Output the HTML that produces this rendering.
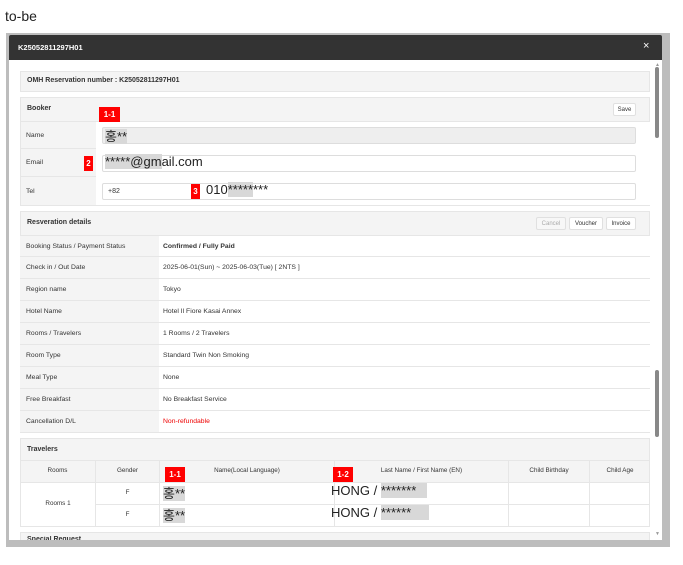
<!DOCTYPE html>
<html><head><meta charset="utf-8"><style>
*{box-sizing:border-box;margin:0;padding:0}
body{width:683px;height:565px;background:#fff;position:relative;overflow:hidden;font-family:"Liberation Sans","Noto Sans CJK KR",sans-serif;color:#222}
.a{position:absolute}
.s{font-size:7px;color:#333}
.tag{position:absolute;background:#f00;color:#fff;font-size:8px;font-weight:bold;text-align:center;line-height:15px}
.box{position:absolute;border:1px solid #e6e6e6;background:#f4f4f4}
.row{position:absolute;left:20px;width:630px;border-bottom:1px solid #e6e6e6;background:#fff}
.lbl{position:absolute;left:0;top:0;bottom:0;background:#f4f4f4;font-size:6.8px;color:#333;padding-left:6px;display:flex;align-items:center}
.val{position:absolute;top:0;bottom:0;font-size:6.8px;color:#333;display:flex;align-items:center}
.btn{position:absolute;background:#fff;border:1px solid #e0e0e0;border-radius:2px;font-size:6px;color:#333;text-align:center;line-height:12px}
.inp{position:absolute;left:102px;width:534px;height:17px;border:1px solid #ddd;border-radius:2px;background:#fff}
.hl{background:#d8d8d8}
.th{position:absolute;font-size:6.3px;color:#333;text-align:center;border-right:1px solid #e6e6e6}
</style></head><body>
<div class="a" style="left:5px;top:8px;font-size:14px;color:#222">to-be</div>
<div class="a" style="left:6px;top:33px;width:664px;height:514px;background:#bdbdbd"></div>
<div class="a" style="left:9px;top:35px;width:653px;height:25px;background:#333;border-radius:2px 2px 0 0"></div>
<div class="a" style="left:18px;top:43px;color:#fff;font-size:7.5px;font-weight:bold">K25052811297H01</div>
<div class="a" style="left:643px;top:40px;color:#fff;font-size:11px">×</div>
<div class="a" style="left:9px;top:60px;width:653px;height:480px;background:#fff"></div>
<div class="a" style="left:655px;top:67px;width:4px;height:71px;background:#888;border-radius:2px"></div>
<div class="a" style="left:655px;top:370px;width:4px;height:67px;background:#888;border-radius:2px"></div>
<div class="a" style="left:655px;top:62px;font-size:5px;color:#999">▲</div>
<div class="a" style="left:655px;top:531px;font-size:5px;color:#999">▼</div>

<div class="box" style="left:20px;top:71px;width:630px;height:21px"></div>
<div class="a s" style="left:27px;top:77px;font-weight:bold">OMH Reservation number : K25052811297H01</div>

<div class="box" style="left:20px;top:97px;width:630px;height:109px"></div>
<div class="a s" style="left:27px;top:105px;font-weight:bold">Booker</div>
<div class="btn" style="left:613px;top:103px;width:23px;height:13px">Save</div>
<div class="row" style="top:121px;height:28px;background:transparent;border-top:1px solid #e6e6e6"><div class="lbl" style="width:76px;background:transparent">Name</div></div>
<div class="row" style="top:149px;height:28px;background:transparent"><div class="lbl" style="width:76px;background:transparent">Email</div></div>
<div class="row" style="top:177px;height:28px;background:transparent;border:none"><div class="lbl" style="width:76px;background:transparent">Tel</div></div>
<div class="a" style="left:96px;top:122px;width:554px;height:83px;background:#fff"></div>
<div class="inp" style="top:127px;background:#eee"></div>
<div class="inp" style="top:155px"></div>
<div class="inp" style="top:183px"></div>
<div class="a" style="left:105px;top:126px;font-size:13px"><span class="hl">홍**</span></div>
<div class="a" style="left:105px;top:154px;font-size:13px"><span class="hl">*****@gm</span>ail.com</div>
<div class="a s" style="left:108px;top:188px">+82</div>
<div class="a" style="left:206px;top:182px;font-size:13px">010<span class="hl">*****</span>***</div>
<div class="tag" style="left:99px;top:107px;width:21px">1-1</div>
<div class="tag" style="left:84px;top:156px;width:9px">2</div>
<div class="tag" style="left:191px;top:184px;width:9px">3</div>

<div class="box" style="left:20px;top:211px;width:630px;height:222px"></div>
<div class="a s" style="left:27px;top:219px;font-weight:bold">Resveration details</div>
<div class="btn" style="left:536px;top:217px;width:30px;height:13px;color:#aaa;background:#f7f7f7">Cancel</div>
<div class="btn" style="left:569px;top:217px;width:34px;height:13px">Voucher</div>
<div class="btn" style="left:606px;top:217px;width:30px;height:13px">Invoice</div>

<div class="row" style="top:235px;height:22px;border-top:1px solid #e6e6e6"><div class="lbl" style="width:139px">Booking Status / Payment Status</div><div class="val" style="left:143px;font-weight:bold">Confirmed / Fully Paid</div></div>
<div class="row" style="top:257px;height:22px"><div class="lbl" style="width:139px">Check in / Out Date</div><div class="val" style="left:143px">2025-06-01(Sun) ~ 2025-06-03(Tue) [ 2NTS ]</div></div>
<div class="row" style="top:279px;height:22px"><div class="lbl" style="width:139px">Region name</div><div class="val" style="left:143px">Tokyo</div></div>
<div class="row" style="top:301px;height:22px"><div class="lbl" style="width:139px">Hotel Name</div><div class="val" style="left:143px">Hotel Il Fiore Kasai Annex</div></div>
<div class="row" style="top:323px;height:22px"><div class="lbl" style="width:139px">Rooms / Travelers</div><div class="val" style="left:143px">1 Rooms / 2 Travelers</div></div>
<div class="row" style="top:345px;height:22px"><div class="lbl" style="width:139px">Room Type</div><div class="val" style="left:143px">Standard Twin Non Smoking</div></div>
<div class="row" style="top:367px;height:22px"><div class="lbl" style="width:139px">Meal Type</div><div class="val" style="left:143px">None</div></div>
<div class="row" style="top:389px;height:22px"><div class="lbl" style="width:139px">Free Breakfast</div><div class="val" style="left:143px">No Breakfast Service</div></div>
<div class="row" style="top:411px;height:22px"><div class="lbl" style="width:139px">Cancellation D/L</div><div class="val" style="left:143px;color:#e00">Non-refundable</div></div>

<div class="box" style="left:20px;top:438px;width:630px;height:89px"></div>
<div class="a s" style="left:27px;top:446px;font-weight:bold">Travelers</div>
<div class="a" style="left:20px;top:482px;width:630px;height:45px;background:#fff;border:1px solid #e6e6e6"></div>
<div class="a" style="left:20px;top:460px;width:630px;border-top:1px solid #e6e6e6"></div>
<div class="a" style="left:96px;top:504px;width:554px;border-top:1px solid #e6e6e6"></div>
<div class="th" style="left:20px;top:460px;width:76px;height:67px;line-height:22px">Rooms<div style="position:absolute;top:39px;width:76px;line-height:10px">Rooms 1</div></div>
<div class="th" style="left:96px;top:460px;width:64px;height:67px;line-height:22px">Gender<div style="line-height:22px">F</div><div style="line-height:22px">F</div></div>
<div class="th" style="left:160px;top:460px;width:175px;height:67px;line-height:22px">Name(Local Language)</div>
<div class="th" style="left:335px;top:460px;width:174px;height:67px;line-height:22px">Last Name / First Name (EN)</div>
<div class="th" style="left:509px;top:460px;width:81px;height:67px;line-height:22px">Child Birthday</div>
<div class="th" style="left:590px;top:460px;width:60px;height:67px;line-height:22px;border:none">Child Age</div>
<div class="a" style="left:163px;top:483px;font-size:13px"><span class="hl">홍**</span></div>
<div class="a" style="left:163px;top:505px;font-size:13px"><span class="hl">홍**</span></div>
<div class="a" style="left:331px;top:483px;font-size:13px">HONG / <span class="hl">*******&nbsp;&nbsp;&nbsp;</span></div>
<div class="a" style="left:331px;top:505px;font-size:13px">HONG / <span class="hl">******&nbsp;&nbsp;&nbsp;&nbsp;&nbsp;</span></div>
<div class="tag" style="left:165px;top:467px;width:20px">1-1</div>
<div class="tag" style="left:333px;top:467px;width:20px">1-2</div>

<div class="box" style="left:20px;top:532px;width:630px;height:8px;border-bottom:none"></div>
<div class="a s" style="left:27px;top:536px;height:4px;overflow:hidden;font-weight:bold">Special Request</div>
</body></html>
